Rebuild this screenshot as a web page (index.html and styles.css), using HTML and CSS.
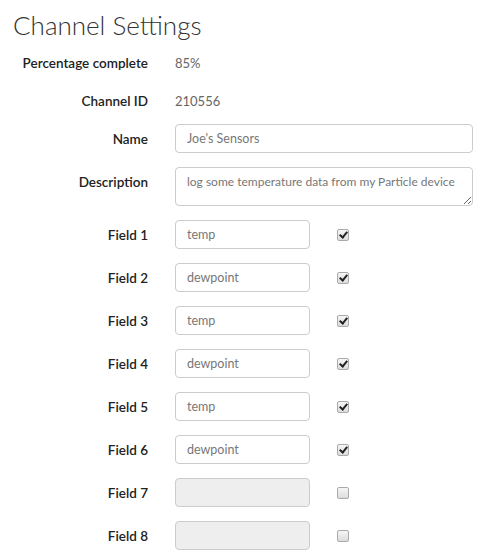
FILE: index.html
```html
<!DOCTYPE html>
<html>
<head>
    <title>Channel Settings</title>
    <meta http-equiv="Content-Type" content="text/html; charset=utf-8"/>
    <link rel="stylesheet" href="styles.css">
</head>
<body>
<div id="channelSettings">
    <h1>Channel Settings</h1>
    <form class="settingsForm">
        <div class="row static">
            <label class="rowLabel">Percentage complete</label>
            <span class="value">85%</span>
        </div>
        <div class="row static">
            <label class="rowLabel">Channel ID</label>
            <span class="value">210556</span>
        </div>
        <div class="row">
            <label class="rowLabel" for="channelName">Name</label>
            <input id="channelName" class="textInput wide" type="text" value="Joe's Sensors">
        </div>
        <div class="row top">
            <label class="rowLabel" for="channelDescription">Description</label>
            <textarea id="channelDescription" class="textInput wide area">log some temperature data from my Particle device</textarea>
        </div>
        <div class="row">
            <label class="rowLabel">Field 1</label>
            <input class="textInput field" type="text" value="temp">
            <input class="fieldCheck" type="checkbox" checked>
        </div>
        <div class="row">
            <label class="rowLabel">Field 2</label>
            <input class="textInput field" type="text" value="dewpoint">
            <input class="fieldCheck" type="checkbox" checked>
        </div>
        <div class="row">
            <label class="rowLabel">Field 3</label>
            <input class="textInput field" type="text" value="temp">
            <input class="fieldCheck" type="checkbox" checked>
        </div>
        <div class="row">
            <label class="rowLabel">Field 4</label>
            <input class="textInput field" type="text" value="dewpoint">
            <input class="fieldCheck" type="checkbox" checked>
        </div>
        <div class="row">
            <label class="rowLabel">Field 5</label>
            <input class="textInput field" type="text" value="temp">
            <input class="fieldCheck" type="checkbox" checked>
        </div>
        <div class="row">
            <label class="rowLabel">Field 6</label>
            <input class="textInput field" type="text" value="dewpoint">
            <input class="fieldCheck" type="checkbox" checked>
        </div>
        <div class="row">
            <label class="rowLabel">Field 7</label>
            <input class="textInput field" type="text" disabled>
            <input class="fieldCheck" type="checkbox">
        </div>
        <div class="row">
            <label class="rowLabel">Field 8</label>
            <input class="textInput field" type="text" disabled>
            <input class="fieldCheck" type="checkbox">
        </div>
    </form>
</div>
</body>
</html>
```

FILE: styles.css
```css
body {
    margin: 0;
    font-family: Lato, "Liberation Sans", sans-serif;
    color: #333;
    background-color: #fff;
}

#channelSettings {
    padding: 8px 0 0 13px;
}

h1 {
    margin: 0 0 6px 0;
    font-family: Lato, sans-serif;
    font-weight: 300;
    font-size: 26px;
    line-height: 34px;
    color: #333;
}

.settingsForm {
    display: flex;
    flex-direction: column;
    gap: 14px;
}

.row {
    display: flex;
    align-items: center;
    min-height: 29px;
}

.row.static {
    margin-bottom: -5px;
}

.row.top {
    align-items: flex-start;
}

.row.top .rowLabel {
    padding-top: 7px;
}

.rowLabel {
    width: 135px;
    flex: none;
    text-align: right;
    font-size: 13.5px;
    font-weight: 600;
    color: #222;
    margin-right: 27px;
}

.value {
    font-size: 13px;
    color: #666;
}

.textInput {
    box-sizing: border-box;
    height: 29px;
    padding: 0 6px 0 11px;
    border: 1px solid #ccc;
    border-radius: 4px;
    font-family: Lato, sans-serif;
    font-size: 12.5px;
    color: #777;
    background-color: #fff;
}

.textInput.wide {
    width: 298px;
}

.textInput.area {
    height: 39px;
    padding-top: 6px;
    font-size: 12px;
    resize: vertical;
    overflow: hidden;
}

.textInput.field {
    width: 135px;
}

.textInput:disabled {
    background-color: #eee;
    border-color: #ccc;
}

.fieldCheck {
    -webkit-appearance: none;
    appearance: none;
    position: relative;
    box-sizing: border-box;
    width: 12px;
    height: 12px;
    margin: 0 0 0 27px;
    border: 1px solid #aaa;
    border-radius: 2px;
    background: linear-gradient(#f6f6f6, #dcdcdc);
}

.fieldCheck:checked::after {
    content: "";
    position: absolute;
    left: 3px;
    top: 0;
    width: 3px;
    height: 6px;
    border: solid #222;
    border-width: 0 2px 2px 0;
    transform: rotate(40deg);
}
```
